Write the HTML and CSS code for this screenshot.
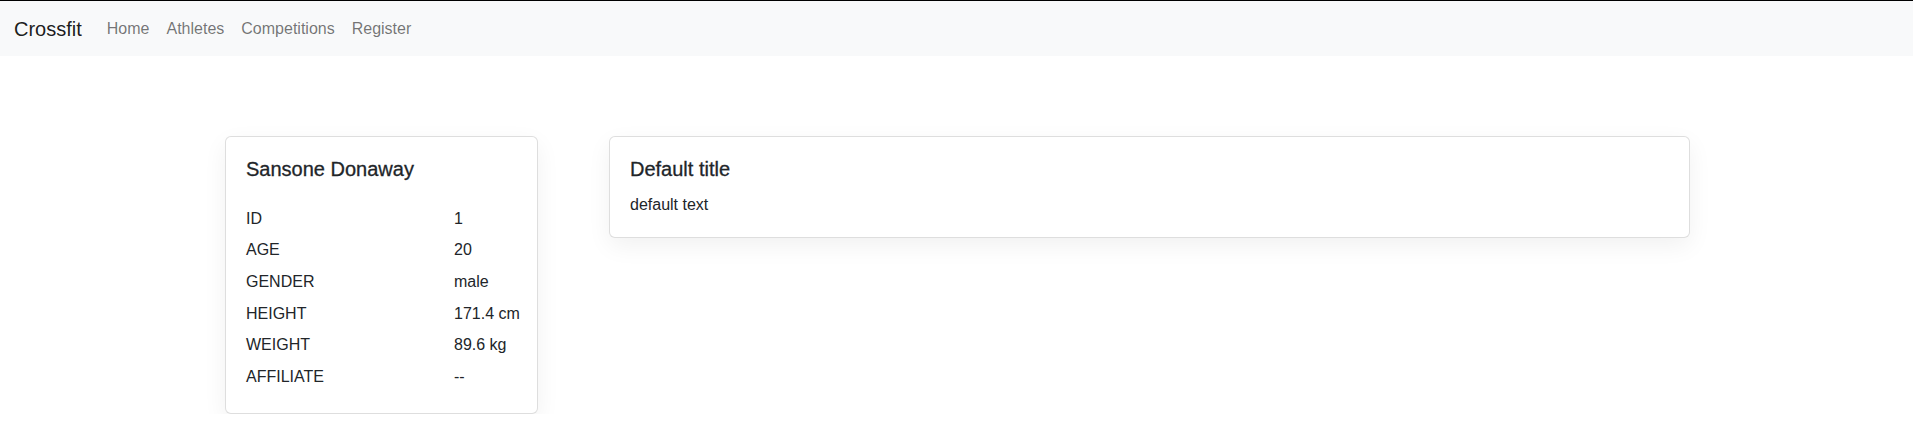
FILE: index.html
```html
<!DOCTYPE html>
<html lang="en">
<head>
<meta charset="utf-8">
<title>Crossfit</title>
<link rel="stylesheet" href="styles.css">
</head>
<body>
<nav class="navbar">
  <a class="brand" href="#">Crossfit</a>
  <ul class="nav-links">
    <li><a href="#">Home</a></li>
    <li><a href="#">Athletes</a></li>
    <li><a href="#">Competitions</a></li>
    <li><a href="#">Register</a></li>
  </ul>
</nav>
<main class="content">
  <section class="card athlete-card">
    <h5 class="card-title">Sansone Donaway</h5>
    <dl class="stats">
      <dt>ID</dt><dd>1</dd>
      <dt>AGE</dt><dd>20</dd>
      <dt>GENDER</dt><dd>male</dd>
      <dt>HEIGHT</dt><dd>171.4 cm</dd>
      <dt>WEIGHT</dt><dd>89.6 kg</dd>
      <dt>AFFILIATE</dt><dd>--</dd>
    </dl>
  </section>
  <section class="card detail-card">
    <h5 class="card-title">Default title</h5>
    <p class="card-text">default text</p>
  </section>
</main>
</body>
</html>
```
FILE: styles.css
```css
* { box-sizing: border-box; }
html, body { margin: 0; padding: 0; }
body {
  font-family: "Liberation Sans", Arial, sans-serif;
  font-size: 16px;
  line-height: 1.5;
  color: #212529;
  background: #fff;
  border-top: 1px solid #000;
}
.navbar {
  display: flex;
  align-items: center;
  height: 55px;
  padding: 0 14px;
  background: #f8f9fa;
}
.brand {
  font-size: 20px;
  color: rgba(0,0,0,0.9);
  text-decoration: none;
  margin-right: 17px;
  line-height: 30px;
}
.nav-links {
  display: flex;
  list-style: none;
  margin: 0;
  padding: 0;
}
.nav-links a {
  display: block;
  padding: 8px 8px;
  color: rgba(0,0,0,0.55);
  text-decoration: none;
}
.nav-links li + li a { margin-left: 1px; }
.content {
  display: flex;
  align-items: flex-start;
  gap: 71px;
  padding: 80px 223px 0 225px;
}
.card {
  background: #fff;
  border: 1px solid rgba(0,0,0,0.13);
  border-radius: 6px;
  box-shadow: 0 8px 24px rgba(0,0,0,0.06);
  padding: 20px;
}
.athlete-card { width: 313px; flex: none; }
.detail-card { flex: 1; min-height: 101px; }
.card-title {
  margin: 0 0 12px;
  font-size: 20px;
  font-weight: 500;
  line-height: 1.2;
  -webkit-text-stroke: 0.3px #212529;
}
.stats {
  display: grid;
  grid-template-columns: 208px 1fr;
  grid-auto-rows: 31.6px;
  align-items: center;
  margin: 0;
  padding-top: 10px;
}
.stats dt, .stats dd { margin: 0; white-space: nowrap; }
.card-text { margin: 0; }
```
